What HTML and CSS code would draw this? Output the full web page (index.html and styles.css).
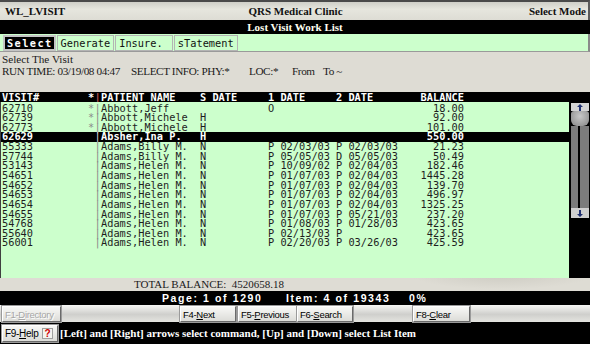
FILE: index.html
```html
<!DOCTYPE html>
<html lang="en">
<head>
<meta charset="UTF-8">
<title>WL_LVISIT</title>
<link rel="stylesheet" href="styles.css">
</head>
<body>

<div class="screen">
  <div class="titlebar">
    <span class="title-left">WL_LVISIT</span>
    <span class="title-center">QRS Medical Clinic</span>
    <span class="title-right">Select Mode</span>
  </div>
  <div class="subtitle">Lost Visit Work List</div>

  <div class="menu">
    <span class="tab active">Select</span>
    <span class="tab">Generate</span>
    <span class="tab">Insure. </span>
    <span class="tab">sTatement</span>
  </div>

  <div class="info">
    <div>Select The Visit</div>
    <div class="runline">
      <span class="run-time">RUN TIME: 03/19/08 04:47</span>
      <span class="sel-info">SELECT INFO: PHY:*</span>
      <span class="loc">LOC:*</span>
      <span class="from">From</span>
      <span>To ~</span>
    </div>
  </div>

  <div class="list">
    <div class="row list-head">
      <span>VISIT#</span>
      <span class="star">*</span>
      <span class="bar head-bar">|</span>
      <span>PATIENT NAME</span>
      <span>S DATE</span>
      <span>1 DATE</span>
      <span>2 DATE</span>
      <span class="bal">BALANCE</span>
    </div>
    <div class="list-body">
      <div class="rows" id="rows"></div>
      <div class="side">
        <div class="scrollbar">
          <div class="sb-btn">
            <svg width="8" height="7" viewBox="0 0 8 7"><path d="M4 0 L7 3 H5 V7 H3 V3 H1 Z" fill="#203070"/></svg>
          </div>
          <div class="sb-thumb"></div>
          <div class="sb-track"></div>
          <div class="sb-btn">
            <svg width="8" height="7" viewBox="0 0 8 7"><path d="M4 7 L7 4 H5 V0 H3 V4 H1 Z" fill="#203070"/></svg>
          </div>
        </div>
      </div>
    </div>
  </div>

  <div class="total">TOTAL BALANCE:&nbsp; 4520658.18</div>

  <div class="pager">
    <span class="pg-page">Page: 1 of 1290</span>
    <span class="pg-item">Item: 4 of 19343</span>
    <span>0%</span>
  </div>

  <div class="buttons">
    <button class="fkey f1" disabled>F1-<u>D</u>irectory</button>
    <button class="fkey f4">F4-<u>N</u>ext</button>
    <button class="fkey f5">F5-<u>P</u>revious</button>
    <button class="fkey f6">F6-<u>S</u>earch</button>
    <button class="fkey f8">F8-<u>C</u>lear</button>
  </div>

  <div class="status">
    <button class="fkey help"><span>F9-<u>H</u>elp</span><span class="qmark">?</span></button>
    <span class="hint">[Left] and [Right] arrows select command, [Up] and [Down] select List Item</span>
  </div>
</div>

<script>
const visits = [
  { id: "62710", star: true, name: "Abbott,Jeff", s: "", d1: "O", d2: "", bal: "18.00" },
  { id: "62739", star: true, name: "Abbott,Michele", s: "H", d1: "", d2: "", bal: "92.00" },
  { id: "62773", star: true, name: "Abbott,Michele", s: "H", d1: "", d2: "", bal: "101.00" },
  { id: "62629", star: false, name: "Absher,Ina P.", s: "H", d1: "", d2: "", bal: "550.00", selected: true },
  { id: "55333", name: "Adams,Billy M.", s: "N", d1: "P 02/03/03", d2: "P 02/03/03", bal: "21.23" },
  { id: "57744", name: "Adams,Billy M.", s: "N", d1: "P 05/05/03", d2: "D 05/05/03", bal: "50.49" },
  { id: "53143", name: "Adams,Helen M.", s: "N", d1: "P 10/09/02", d2: "P 02/04/03", bal: "182.46" },
  { id: "54651", name: "Adams,Helen M.", s: "N", d1: "P 01/07/03", d2: "P 02/04/03", bal: "1445.28" },
  { id: "54652", name: "Adams,Helen M.", s: "N", d1: "P 01/07/03", d2: "P 02/04/03", bal: "139.70" },
  { id: "54653", name: "Adams,Helen M.", s: "N", d1: "P 01/07/03", d2: "P 02/04/03", bal: "496.97" },
  { id: "54654", name: "Adams,Helen M.", s: "N", d1: "P 01/07/03", d2: "P 02/04/03", bal: "1325.25" },
  { id: "54655", name: "Adams,Helen M.", s: "N", d1: "P 01/07/03", d2: "P 05/21/03", bal: "237.20" },
  { id: "54768", name: "Adams,Helen M.", s: "N", d1: "P 01/08/03", d2: "P 01/28/03", bal: "423.65" },
  { id: "55640", name: "Adams,Helen M.", s: "N", d1: "P 02/13/03", d2: "P", bal: "423.65" },
  { id: "56001", name: "Adams,Helen M.", s: "N", d1: "P 02/20/03", d2: "P 03/26/03", bal: "425.59" }
];

function createRows() {
  const list = document.getElementById('rows');
  visits.forEach(v => {
    const row = document.createElement('div');
    row.className = v.selected ? 'row selected' : 'row';
    row.innerHTML = `
      <span>${v.id}</span>
      <span class="star">${v.star ? '*' : ''}</span>
      <span class="bar">|</span>
      <span>${v.name}</span>
      <span>${v.s}</span>
      <span>${v.d1}</span>
      <span>${v.d2}</span>
      <span class="bal">${v.bal}</span>
    `;
    list.appendChild(row);
  });
}

createRows();
</script>
</body>
</html>
```

FILE: styles.css
```css
* {
  margin: 0;
  padding: 0;
  box-sizing: border-box;
}

body {
  background: #000;
}

.screen {
  width: 590px;
  height: 344px;
  overflow: hidden;
  background-color: #dedcd4;
  background-image:
    radial-gradient(ellipse 120px 20px at 15% 70%, rgba(255, 255, 255, 0.5), transparent),
    radial-gradient(ellipse 160px 18px at 60% 40%, rgba(255, 255, 255, 0.45), transparent),
    radial-gradient(ellipse 90px 14px at 85% 80%, rgba(190, 188, 178, 0.5), transparent);
  font-family: "Liberation Serif", serif;
  color: #111;
}

.titlebar {
  height: 20px;
  border-top: 2px solid #4a4a4a;
  border-right: 2px solid #5a5a5a;
  display: grid;
  grid-template-columns: 1fr auto 1fr;
  align-items: center;
  padding: 0 2px 0 5px;
  font-size: 11px;
  font-weight: bold;
  background: linear-gradient(#cfcfc8, #e6e6de 40%, #dddcd4);
}

.title-right {
  justify-self: end;
}

.subtitle {
  height: 14px;
  line-height: 14px;
  background: #000;
  color: #fffff0;
  text-align: center;
  font-size: 11px;
  font-weight: bold;
}

.menu {
  height: 18px;
  background: #ccffcc;
  border-bottom: 1px solid #9a9a9a;
  border-right: 2px solid #8a8a8a;
  display: flex;
  gap: 1px;
  padding: 1px 0 0 3px;
}

.tab {
  height: 16px;
  line-height: 14px;
  padding: 0 3px;
  border: 1px solid #b4b4b4;
  font-family: "DejaVu Sans Mono", monospace;
  font-size: 10.3px;
  color: #111;
  white-space: pre;
}

.tab.active {
  background: #000;
  color: #fff;
  font-weight: bold;
  letter-spacing: 1.4px;
  border: 2px solid #c4c4c4;
  line-height: 12px;
  padding: 0 1px 0 2px;
}

.info {
  height: 40px;
  padding: 1px 2px 0;
  font-size: 11.2px;
  line-height: 12px;
  color: #1a1a1a;
}

.runline {
  display: flex;
  white-space: nowrap;
  letter-spacing: -0.4px;
}

.run-time { width: 129px; }
.sel-info { width: 118px; }
.loc { width: 43px; }
.from { width: 31px; }

.list {
  font-family: "DejaVu Sans Mono", monospace;
  font-size: 10.3px;
}

.row {
  display: grid;
  grid-template-columns: 86px 6px 7px 99px 68px 68px 68px 60px;
  padding-left: 2px;
  height: 9.65px;
  line-height: 9.65px;
  white-space: pre;
  color: #1e1e1e;
}

.list-head {
  height: 10px;
  line-height: 10px;
  background: #000;
  color: #fff;
  font-weight: bold;
}

.star {
  color: #8a8a8a;
  text-align: center;
}

.list-head .star {
  color: #fff;
}

.bar {
  color: #8a8a8a;
  text-align: center;
}

.head-bar {
  color: #b05050;
}

.bal {
  text-align: right;
}

.row.selected {
  background: #000;
  color: #fff;
  font-weight: bold;
}

.row.selected .bar {
  color: #ddd;
  font-weight: normal;
}

.list-body {
  display: flex;
  height: 176px;
}

.rows {
  width: 569px;
  background: #ccffcc;
  border-left: 1px solid #404040;
  padding-top: 1.5px;
}

.rows .row {
  padding-left: 1px;
}

.side {
  width: 21px;
  background: #000;
  padding: 1px 0 0 2px;
}

.scrollbar {
  width: 18px;
  height: 115px;
  display: flex;
  flex-direction: column;
}

.sb-btn {
  height: 8px;
  background: #d4d4d4;
  display: flex;
  align-items: center;
  justify-content: center;
}

.sb-btn:last-child {
  height: 10px;
  background: #d0d0d0;
}

.sb-thumb {
  height: 15px;
  background: radial-gradient(circle at 50% 35%, #c8c8c8, #9a9a9a 70%);
  border-radius: 3px 3px 6px 6px;
}

.sb-track {
  flex: 1;
  background: linear-gradient(90deg, #7c7c7c 7px, #000 7px, #000 9px, #7c7c7c 9px);
}

.total {
  height: 13px;
  line-height: 13px;
  padding-left: 134px;
  font-size: 11px;
  color: #1a1a1a;
}

.pager {
  height: 14px;
  line-height: 14px;
  background: #000;
  color: #fff;
  display: flex;
  padding-left: 162px;
  font-family: "Liberation Sans", sans-serif;
  font-weight: bold;
  font-size: 10.5px;
  letter-spacing: 1.6px;
  white-space: nowrap;
}

.pg-page { width: 124px; }
.pg-item { width: 123px; }

.buttons {
  height: 17px;
  display: flex;
  padding-top: 1px;
  background: linear-gradient(#f6f6f4, #cfcfcc 55%, #e4e4e0);
}

.fkey {
  height: 16px;
  padding: 0 2px;
  text-align: left;
  white-space: nowrap;
  overflow: hidden;
  font-family: "Liberation Sans", sans-serif;
  font-size: 9.5px;
  letter-spacing: -0.3px;
  color: #000;
  background: linear-gradient(#f8f8f6, #dcdcd8);
  border: 1px solid;
  border-color: #ffffff #6a6a6a #6a6a6a #ffffff;
  box-shadow: 0 0 0 1px #9a9a9a;
}

.fkey:disabled {
  color: #a6a6a6;
  text-shadow: 1px 1px 0 #fff;
}

.f1 { width: 59px; margin-left: 2px; }
.f4 { width: 56px; margin-left: 119px; }
.f5 { width: 59px; margin-left: 2px; }
.f6 { width: 56px; }
.f8 { width: 57px; margin-left: 60px; }

.status {
  height: 22px;
  background: #000;
  display: flex;
  align-items: center;
  padding-left: 2px;
  gap: 2px;
}

.help {
  width: 56px;
  height: 17px;
  margin-top: 1px;
  display: flex;
  align-items: center;
  justify-content: space-between;
  padding: 0 4px 0 2px;
  font-size: 10px;
}

.qmark {
  width: 11px;
  height: 11px;
  line-height: 10px;
  text-align: center;
  background: #f4f4f0;
  border: 1px solid #a0a0a0;
  color: #d00000;
  font-weight: bold;
  font-size: 10px;
  letter-spacing: 0;
}

.hint {
  color: #fff;
  font-size: 11px;
  font-weight: bold;
  white-space: nowrap;
}
```
